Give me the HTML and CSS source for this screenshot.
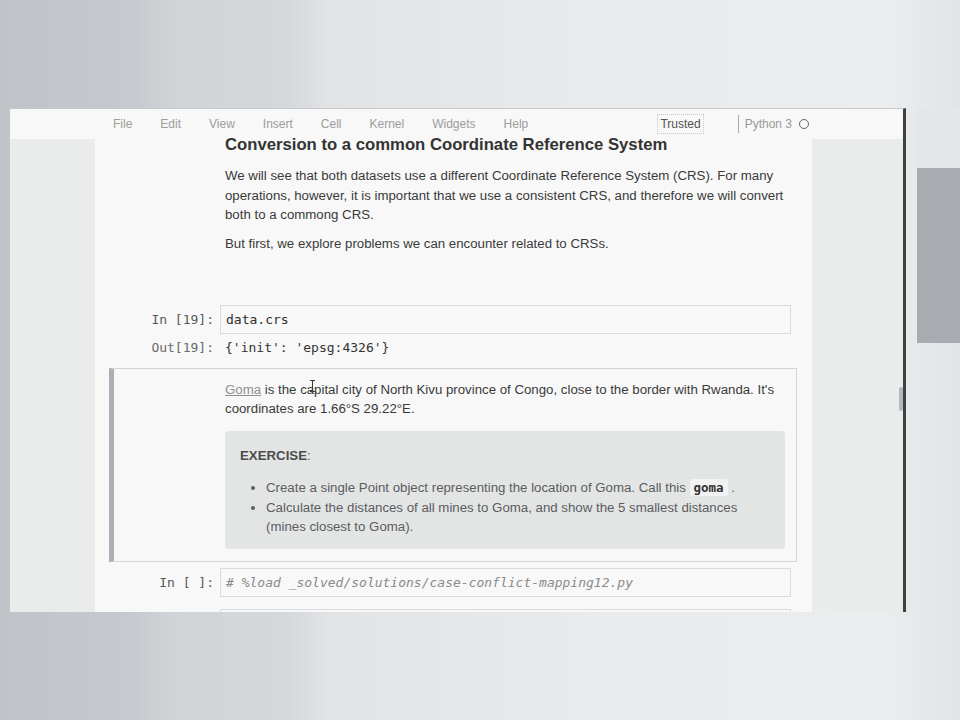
FILE: index.html
```html
<!DOCTYPE html>
<html lang="en">
<head>
<meta charset="utf-8">
<title>Notebook</title>
<link rel="stylesheet" href="styles.css">
</head>
<body>
<div class="desk">
  <div class="window">
    <div class="menubar">
      <div class="menubar-inner">
        <nav class="menu">
          <span>File</span><span>Edit</span><span>View</span><span>Insert</span><span>Cell</span><span>Kernel</span><span>Widgets</span><span>Help</span>
        </nav>
        <div class="kernel-area">
          <span class="trusted">Trusted</span>
          <span class="sep"></span>
          <span class="kname">Python 3</span>
          <span class="kstatus"></span>
        </div>
      </div>
    </div>
    <div class="site">
      <div class="container">
        <div class="cell text-cell first">
          <div class="prompt"></div>
          <div class="rendered">
            <h2>Conversion to a common Coordinate Reference System</h2>
            <p>We will see that both datasets use a different Coordinate Reference System (CRS). For many operations, however, it is important that we use a consistent CRS, and therefore we will convert both to a commong CRS.</p>
            <p class="last">But first, we explore problems we can encounter related to CRSs.</p>
          </div>
        </div>

        <div class="cell code-cell">
          <div class="row">
            <div class="prompt in">In&nbsp;[19]:</div>
            <div class="input-area">data.crs</div>
          </div>
          <div class="row out-row">
            <div class="prompt outp">Out[19]:</div>
            <div class="output">{'init': 'epsg:4326'}</div>
          </div>
        </div>

        <div class="cell text-cell selected">
          <div class="prompt"></div>
          <div class="rendered">
            <p class="goma-p"><a class="link">Goma</a> is the capital city of North Kivu province of Congo, close to the border with Rwanda. It's coordinates are 1.66°S 29.22°E.</p>
            <div class="exercise">
              <p class="ex-title"><b>EXERCISE</b>:</p>
              <ul>
                <li>Create a single Point object representing the location of Goma. Call this <code>goma</code> .</li>
                <li>Calculate the distances of all mines to Goma, and show the 5 smallest distances (mines closest to Goma).</li>
              </ul>
            </div>
          </div>
          <svg class="ibeam" width="7" height="12" viewBox="0 0 7 12"><path d="M1 0.5h5M3.5 0.5v11M1 11.5h5" stroke="#3a3a3a" stroke-width="1" fill="none"/></svg>
        </div>

        <div class="cell code-cell">
          <div class="row">
            <div class="prompt in">In&nbsp;[&nbsp;]:</div>
            <div class="input-area"><span class="comment"># %load _solved/solutions/case-conflict-mapping12.py</span></div>
          </div>
        </div>

        <div class="cell code-cell">
          <div class="row">
            <div class="prompt in"></div>
            <div class="input-area empty"></div>
          </div>
        </div>
      </div>
    </div>
    <div class="scroll-thumb"></div>
  </div>
  <div class="side-panel"></div>
</div>
</body>
</html>
```

FILE: styles.css
```css
html, body {
  margin: 0;
  padding: 0;
}

body {
  width: 960px;
  height: 720px;
  overflow: hidden;
  background: linear-gradient(90deg, #c0c4c8 0, #c6cace 14%, #d1d4d7 18%, #d5d8db 30%, #e1e3e5 34%, #e8eaeb 60%, #ebedee 92%, #e1e4e6 100%);
  font-family: "Liberation Sans", Arial, sans-serif;
}

.desk {
  display: flex;
  align-items: flex-start;
  padding: 108px 0 0 10px;
}

.window {
  position: relative;
  flex: none;
  width: 893px;
  height: 503px;
  border-top: 1px solid #c3c7ca;
  border-right: 3px solid #3e4143;
  background: #eaecec;
  overflow: hidden;
  display: flex;
  flex-direction: column;
}

.menubar {
  flex: none;
  height: 30px;
  background: #f7f8f7;
}

.menubar-inner {
  margin-left: 85px;
  width: 717px;
  height: 30px;
  box-sizing: border-box;
  padding: 0 3px 0 18px;
  display: flex;
  align-items: center;
}

.menu {
  display: flex;
  gap: 28px;
  font-size: 12px;
  line-height: 30px;
  color: #9c9c9c;
}

.kernel-area {
  margin-left: auto;
  display: flex;
  align-items: center;
  font-size: 12px;
}

.trusted {
  box-sizing: border-box;
  height: 20px;
  line-height: 18px;
  padding: 0 2px;
  border: 1px dotted #c4c7c9;
  color: #555;
}

.sep {
  width: 1px;
  height: 18px;
  background: #a7a9ab;
  margin-left: 34px;
  margin-right: 6px;
}

.kname {
  color: #9a9a9a;
}

.kstatus {
  width: 8px;
  height: 8px;
  border: 1.5px solid #666;
  border-radius: 50%;
  margin-left: 7px;
}

.site {
  flex: 1;
  display: flex;
}

.container {
  margin-left: 85px;
  width: 717px;
  box-sizing: border-box;
  padding: 0 15px 0 14px;
  background: #f7f8f7;
}

.cell {
  border: 1px solid transparent;
  padding: 5px;
}

.text-cell {
  display: flex;
}

.code-cell {
  display: flex;
  flex-direction: column;
}

.row {
  display: flex;
}

.prompt {
  flex: none;
  width: 105px;
  box-sizing: border-box;
  padding-right: 6px;
  text-align: right;
  font-family: "DejaVu Sans Mono", monospace;
  font-size: 13px;
  line-height: 17px;
}

.prompt.in {
  padding-top: 6px;
  color: #595959;
}

.prompt.outp {
  color: #6a6a6a;
}

.input-area {
  flex: 1;
  border: 1px solid #d9dcdd;
  padding: 5px;
  font-family: "DejaVu Sans Mono", monospace;
  font-size: 13px;
  line-height: 17px;
  color: #2e2e2e;
  white-space: pre;
}

.input-area.empty {
  height: 17px;
}

.comment {
  font-style: italic;
  color: #8a8a8a;
}

.out-row {
  margin-top: 5px;
  padding-bottom: 6px;
}

.output {
  padding-left: 5px;
  font-family: "DejaVu Sans Mono", monospace;
  font-size: 13px;
  line-height: 17px;
  color: #333;
}

.rendered {
  flex: 1;
  padding: 0 5px;
  font-size: 13.25px;
  line-height: 19.5px;
  color: #3a3a3a;
}

.first {
  margin-top: -10px;
}

.first .rendered {
  padding-top: 1px;
  padding-bottom: 39px;
}

.rendered h2 {
  margin: 0 0 13px;
  font-size: 16.7px;
  line-height: 17px;
  font-weight: bold;
  color: #333;
}

.rendered p {
  margin: 0 0 9.5px;
}

.rendered p.last {
  margin-bottom: 0;
}

.selected {
  position: relative;
  border-color: #d2d5d7;
  border-left: 5px solid #aab0b6;
  padding-left: 1px;
}

.selected .rendered {
  padding-top: 6px;
  padding-bottom: 7px;
}

.rendered p.goma-p {
  margin-bottom: 12px;
}

.link {
  color: #8b9095;
  text-decoration: underline;
}

.exercise {
  margin-right: 1px;
  padding: 15px 15px 12px;
  background: #e3e5e5;
  border-radius: 4px;
  color: #5a5c5e;
}

.rendered .ex-title {
  margin: 0 0 13px;
}

.ex-title b {
  color: #4c4c4c;
}

.exercise ul {
  margin: 0;
  padding-left: 26px;
}

.exercise code {
  font-family: "DejaVu Sans Mono", monospace;
  font-weight: bold;
  font-size: 12.5px;
  color: #333;
  background: #f1f2f2;
  padding: 1px 4px;
  border-radius: 2px;
}

.ibeam {
  position: absolute;
  left: 195px;
  top: 11px;
}

.scroll-thumb {
  position: absolute;
  left: 889px;
  top: 278px;
  width: 4px;
  height: 24px;
  border-radius: 2px;
  background: #b2b8be;
}

.side-panel {
  flex: none;
  width: 43px;
  height: 235px;
  margin-left: 11px;
  background: linear-gradient(180deg, #e4e6e7 0, #e4e6e7 60px, #a8acb0 60px, #a8acb0 100%);
}
```
